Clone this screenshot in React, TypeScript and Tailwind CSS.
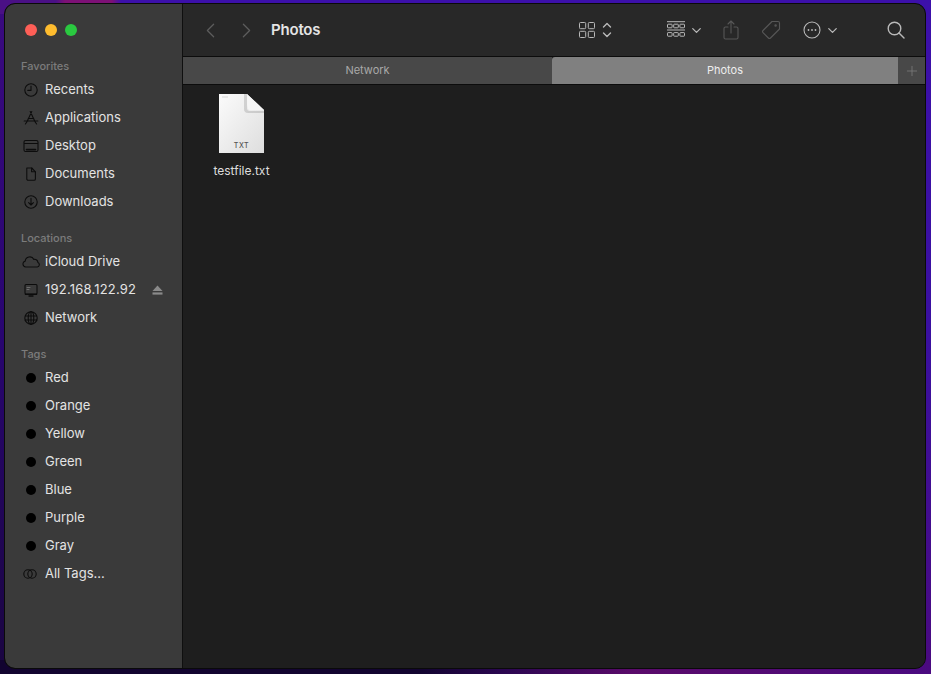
import type { ReactNode } from "react"
import { ChevronDown, ChevronLeft, ChevronRight, Plus } from "lucide-react"

const ink = "#0c0c0c"

function Glyph({ children }: { children: ReactNode }) {
  return (
    <svg width="18" height="18" viewBox="0 0 18 18" fill="none" stroke={ink} strokeWidth="1.1" strokeLinecap="round" strokeLinejoin="round">
      {children}
    </svg>
  )
}

const RecentsIcon = () => (
  <Glyph>
    <circle cx="9" cy="9" r="6.2" />
    <path d="M9 5v4.4H5.8" />
  </Glyph>
)

const AppsIcon = () => (
  <Glyph>
    <path d="M9.800 2.500 4.800 13M8.200 2.500 13.200 13M2.200 12h13.600M3.400 15l1.400-2M14.600 15l-1.400-2M6.200 9.500h5.600" />
  </Glyph>
)

const DesktopIcon = () => (
  <Glyph>
    <rect x="2" y="3.500" width="14" height="11" rx="1.600" />
    <path d="M2.500 6.500h13" />
    <path d="M4.500 12.600h9" strokeWidth="1.600" />
  </Glyph>
)

const DocIcon = () => (
  <Glyph>
    <path d="M4.800 3h5l3.600 3.800V14a1.300 1.300 0 0 1-1.300 1.300H6.100A1.300 1.300 0 0 1 4.800 14z" />
    <path d="M9.600 3v3.800h3.600" />
  </Glyph>
)

const DownloadIcon = () => (
  <Glyph>
    <circle cx="9" cy="9" r="6.200" />
    <path d="M9 5.400v6.600M6.600 9.600 9 12l2.400-2.400" />
  </Glyph>
)

const CloudIcon = () => (
  <Glyph>
    <path d="M5 14H3.800a3 3 0 0 1-.6-5.900 4.600 4.600 0 0 1 8.700-1.700 3.300 3.300 0 0 1 4 3.200A2.300 2.300 0 0 1 15.300 14z" />
  </Glyph>
)

const ScreenIcon = () => (
  <Glyph>
    <rect x="3" y="3.500" width="12" height="9.500" rx="1" />
    <path d="M5 6.500h3M5 8.500h2" strokeWidth=".8" stroke="#777" />
    <path d="M3.500 13.400h11" strokeWidth="1.400" />
    <path d="M7 15h4" strokeWidth="1.400" />
  </Glyph>
)

const GlobeIcon = () => (
  <Glyph>
    <circle cx="9" cy="9" r="6.200" />
    <ellipse cx="9" cy="9" rx="2.800" ry="6.200" />
    <path d="M3.200 7h11.600M3.200 11h11.600M9 2.800v12.400" />
  </Glyph>
)

const AllTagsIcon = () => (
  <Glyph>
    <circle cx="6" cy="9" r="4.200" />
    <circle cx="10" cy="9" r="4.200" />
  </Glyph>
)

const TagDot = () => <span className="w-[10px] h-[10px] rounded-full bg-black" />

function Row({ icon, label, trailing, wide }: { icon: ReactNode; label: string; trailing?: ReactNode; wide?: boolean }) {
  return (
    <div className="flex items-center h-[28px] pl-[17px]">
      <span className="w-[18px] h-[18px] flex items-center justify-center shrink-0">{icon}</span>
      <span className={`ml-[5px] text-[13px] text-[#e3e3e3] ${wide ? "tracking-[0.2px]" : ""}`}>{label}</span>
      {trailing}
    </div>
  )
}

function Heading({ children }: { children: ReactNode }) {
  return <div className="h-[20px] pl-[16px] flex items-center text-[11px] font-medium text-[#7c7c7c]">{children}</div>
}

function Sidebar() {
  return (
    <aside className="w-[178px] shrink-0 bg-[#3a3a3a] border-r border-[#0f0f0f] rounded-l-[10px]">
      <div className="h-[52px] flex items-center gap-[8px] pl-[20px]">
        <span className="w-[12px] h-[12px] rounded-full bg-[#fe5f57]" />
        <span className="w-[12px] h-[12px] rounded-full bg-[#febc2e]" />
        <span className="w-[12px] h-[12px] rounded-full bg-[#2ac940]" />
      </div>
      <Heading>Favorites</Heading>
      <Row icon={<RecentsIcon />} label="Recents" />
      <Row icon={<AppsIcon />} label="Applications" />
      <Row icon={<DesktopIcon />} label="Desktop" />
      <Row icon={<DocIcon />} label="Documents" />
      <Row icon={<DownloadIcon />} label="Downloads" />
      <div className="h-[12px]" />
      <Heading>Locations</Heading>
      <Row icon={<CloudIcon />} label="iCloud Drive" />
      <Row
        icon={<ScreenIcon />}
        label="192.168.122.92"
        wide
        trailing={
          <svg className="ml-auto mr-[19px]" width="11" height="10" viewBox="0 0 11 10" fill="#8a8a8a">
            <path d="M5.500 0.500 10.500 6H0.500z" />
            <rect x="0.500" y="7.400" width="10" height="2.200" />
          </svg>
        }
      />
      <Row icon={<GlobeIcon />} label="Network" />
      <div className="h-[12px]" />
      <Heading>Tags</Heading>
      {["Red", "Orange", "Yellow", "Green", "Blue", "Purple", "Gray"].map((t) => (
        <Row key={t} icon={<TagDot />} label={t} />
      ))}
      <Row icon={<AllTagsIcon />} label="All Tags..." />
    </aside>
  )
}

function Toolbar() {
  return (
    <div className="h-[52px] flex items-center bg-[#282828] text-[#b9b9b9] rounded-tr-[10px]">
      <ChevronLeft className="ml-[15px] text-[#5c5c5c]" size={25} strokeWidth={1.2} />
      <ChevronRight className="ml-[11px] text-[#5c5c5c]" size={25} strokeWidth={1.2} />
      <span className="ml-[12px] text-[15px] font-semibold tracking-[-0.2px] text-[#e4e4e4]">Photos</span>
      <div className="flex-1" />
      <svg width="16" height="16" viewBox="0 0 16 16" fill="none" stroke="currentColor" strokeWidth="1">
        <rect x=".5" y=".5" width="6.200" height="6.200" rx="1" />
        <rect x="9.300" y=".5" width="6.200" height="6.200" rx="1" />
        <rect x=".5" y="9.300" width="6.200" height="6.200" rx="1" />
        <rect x="9.300" y="9.300" width="6.200" height="6.200" rx="1" />
      </svg>
      <svg className="ml-[7px]" width="10" height="16" viewBox="0 0 10 16" fill="none" stroke="currentColor" strokeWidth="1.400" strokeLinecap="round" strokeLinejoin="round">
        <path d="M1.500 5 5 1.500 8.500 5M1.500 11 5 14.500 8.500 11" />
      </svg>
      <svg className="ml-[55px]" width="18" height="18" viewBox="0 0 18 18" fill="none" stroke="currentColor" strokeWidth="1">
        <path d="M0 .7h18M0 9h18" />
        <rect x=".5" y="3.200" width="4.600" height="3.600" rx=".6" />
        <rect x="6.700" y="3.200" width="4.600" height="3.600" rx=".6" />
        <rect x="12.900" y="3.200" width="4.600" height="3.600" rx=".6" />
        <rect x=".5" y="11.600" width="4.600" height="3.600" rx=".6" />
        <rect x="6.700" y="11.600" width="4.600" height="3.600" rx=".6" />
        <rect x="12.900" y="11.600" width="4.600" height="3.600" rx=".6" />
      </svg>
      <ChevronDown className="ml-[4px]" size={15} strokeWidth={2} />
      <svg className="ml-[19px] text-[#575757]" width="16" height="20" viewBox="0 0 16 20" fill="none" stroke="currentColor" strokeWidth="1.100" strokeLinecap="round" strokeLinejoin="round">
        <path d="M5 7H2.500A1.500 1.500 0 0 0 1 8.500V17.500A1.500 1.500 0 0 0 2.500 19h11a1.500 1.500 0 0 0 1.500-1.500V8.500A1.500 1.500 0 0 0 13.500 7H11" />
        <path d="M8 13V1M5 4l3-3 3 3" />
      </svg>
      <svg className="ml-[22px] text-[#575757]" width="20" height="20" viewBox="0 0 20 20" fill="none" stroke="currentColor" strokeWidth="1.100" strokeLinejoin="round">
        <path d="M11 1.500h6a1.500 1.500 0 0 1 1.500 1.500v6L9.500 18a1.500 1.500 0 0 1-2.100 0L2 12.600a1.500 1.500 0 0 1 0-2.100z" />
        <circle cx="14.600" cy="5.400" r=".7" />
      </svg>
      <svg className="ml-[22px]" width="18" height="18" viewBox="0 0 18 18" fill="none" stroke="currentColor" strokeWidth="1.100">
        <circle cx="9" cy="9" r="8" />
        <circle cx="5.500" cy="9" r=".9" fill="currentColor" stroke="none" />
        <circle cx="9" cy="9" r=".9" fill="currentColor" stroke="none" />
        <circle cx="12.500" cy="9" r=".9" fill="currentColor" stroke="none" />
      </svg>
      <ChevronDown className="ml-[4px]" size={15} strokeWidth={2} />
      <svg className="ml-[47px] mr-[20px]" width="18" height="18" viewBox="0 0 18 18" fill="none" stroke="currentColor" strokeWidth="1.400" strokeLinecap="round">
        <circle cx="7.500" cy="7.500" r="6.300" />
        <path d="M12 12l5 5" />
      </svg>
    </div>
  )
}

function TabBar() {
  return (
    <div className="h-[29px] flex border-y border-[#0c0c0c] text-[11px]">
      <div className="w-[369px] flex items-center justify-center bg-[#484848] text-[#a9a9a9]">Network</div>
      <div className="flex-1 flex items-center justify-center bg-[#808080] text-[#eeeeee] rounded-tl-[3px]">Photos</div>
      <div className="w-[27px] flex items-center justify-center bg-[#484848] text-[#7c7c7c]">
        <Plus size={16} strokeWidth={1.2} />
      </div>
    </div>
  )
}

function TxtFile() {
  return (
    <svg width="45" height="59" viewBox="0 0 45 59">
      <defs>
        <linearGradient id="sheet" x1="0" y1="0" x2="1" y2="1">
          <stop offset="0" stopColor="#fbfbfb" />
          <stop offset="1" stopColor="#dedede" />
        </linearGradient>
      </defs>
      <path d="M0 0h28l17 16v43H0z" fill="url(#sheet)" />
      <path d="M28 0v14c0 2 1 3 3 3h14v2H29c-2.500 0-4-1.500-4-4V0z" fill="#000" opacity=".13" />
      <path d="M28 0c0 8 0 16 3 16h14z" fill="#f6f6f6" />
      <path d="M3 3h6" stroke="#c9c9c9" strokeWidth=".7" />
    </svg>
  )
}

export default function App() {
  return (
    <div
      className="w-[931px] h-[674px] overflow-hidden pt-[3px] pl-[4px] pr-[5px] pb-[5px] [background:linear-gradient(90deg,#4a1085_0%,#4a1085_6%,#7d1075_7%,#7d1075_12%,#3c10aa_13%,#3c10aa_100%)_top/100%_14px_no-repeat,linear-gradient(90deg,#120430_0%,#120430_45%,#2a0650_54%,#5a0a6a_68%,#4a0a80_100%)_bottom/100%_14px_no-repeat,linear-gradient(180deg,#3a0a80_0%,#280570_50%,#1a0540_100%)_left/5px_100%_no-repeat,linear-gradient(180deg,#3c10aa_0%,#3a10a0_50%,#4a0a80_100%)_right/6px_100%_no-repeat]"
      style={{ fontFamily: "Inter, 'Liberation Sans', sans-serif" }}
    >
      <div className="h-full flex border border-[#0a0a0a] rounded-[11px] overflow-hidden bg-[#1e1e1e]">
        <Sidebar />
        <main className="flex-1 flex flex-col min-w-0">
          <Toolbar />
          <TabBar />
          <div className="flex-1 bg-[#1e1e1e] pt-[9px] pl-[30px]">
            <div className="w-[57px] flex flex-col items-center">
              <div className="relative">
                <TxtFile />
                <span className="absolute bottom-[2px] left-0 right-0 text-center text-[7px] font-medium tracking-[0.5px] text-[#555555]">TXT</span>
              </div>
              <span className="mt-[9px] whitespace-nowrap text-[12px] text-[#dddddd]">testfile.txt</span>
            </div>
          </div>
        </main>
      </div>
    </div>
  )
}
